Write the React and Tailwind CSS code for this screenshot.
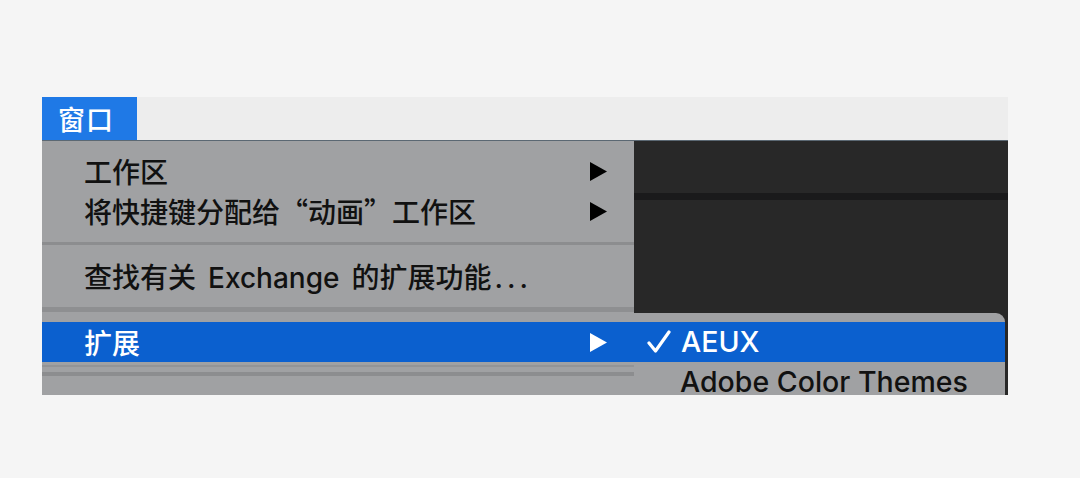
import React from "react";

const CJK = { fontFamily: '"Noto Sans CJK SC", "Noto Sans", sans-serif' };
const LAT = { fontFamily: 'Inter, "Noto Sans CJK SC", sans-serif' };

function Tri({ color = "#000" }) {
  return (
    <svg width="19" height="21" viewBox="0 0 19 21" className="shrink-0">
      <polygon points="1,1 18,10.5 1,20" fill={color} />
    </svg>
  );
}

function Row({ children, arrow, active }) {
  return (
    <div
      className={
        "h-[40px] flex items-center pl-[42px] pr-[26px] text-[28px] leading-none font-medium " +
        (active ? "bg-[#0b60cf] text-white" : "text-[#111]")
      }
    >
      <span className="flex-1 whitespace-nowrap">{children}</span>
      {arrow && <Tri color={active ? "#fff" : "#000"} />}
    </div>
  );
}

export default function App() {
  return (
    <div className="w-full h-[478px] bg-[#f5f5f5] pt-[97px] pl-[42px]" style={CJK}>
      <div className="w-[966px] h-[298px] overflow-hidden flex flex-col">
        <div className="h-[44px] flex bg-[#ededed] border-b border-[#5b6873] shrink-0">
          <div className="w-[95px] h-full bg-[#1f79e6] text-white text-[27px] font-medium leading-none flex items-center pl-[16px] tracking-[1px]">
            窗口
          </div>
        </div>
        <div className="flex flex-1">
          <div className="w-[592px] bg-[#a0a1a3] pt-[10px] flex flex-col">
            <Row arrow>工作区</Row>
            <Row arrow>将快捷键分配给“动画”工作区</Row>
            <div className="h-[26px] flex flex-col pt-[11px]">
              <div className="h-[3px] bg-[#8c8d8f]" />
            </div>
            <Row>
              查找有关<span style={LAT} className="mx-[12px]">Exchange</span>的扩展功能<span style={LAT} className="tracking-[4px] ml-[3px]">...</span>
            </Row>
            <div className="h-[25px] flex flex-col pt-[10px]">
              <div className="h-[5px] bg-[#8e8f91]" />
            </div>
            <Row arrow active>扩展</Row>
            <div className="h-[19px] flex flex-col pt-[3px] gap-[5px]">
              <div className="h-[2px] bg-[#939496]" />
              <div className="h-[4px] bg-[#8c8d8f]" />
            </div>
            <div className="h-[40px] pl-[158px] pt-[14px] text-[28px] leading-none text-[#111] whitespace-nowrap">
              共享面板
            </div>
          </div>
          <div className="flex-1 relative bg-[#282828] flex flex-col">
            <div className="h-[52px]" />
            <div className="h-[7px] bg-[#1a1a1b]" />
            <div className="absolute left-0 top-[172px] w-[371px] h-[100px] bg-[#a0a1a3] rounded-tr-[9px] pt-[9px]" style={LAT}>
              <div className="h-[40px] bg-[#0b60cf] text-white flex items-center pl-[13px] text-[28.5px] font-medium leading-none">
                <svg width="24" height="24" viewBox="0 0 24 24" className="mr-[10px]">
                  <path d="M2 13 L8.5 21 L22 2" fill="none" stroke="#fff" strokeWidth="3.2" strokeLinecap="round" strokeLinejoin="round" />
                </svg>
                AEUX
              </div>
              <div className="h-[40px] flex items-center pl-[46px] text-[28.5px] font-medium leading-none text-[#111] whitespace-nowrap">
                Adobe Color Themes
              </div>
            </div>
          </div>
        </div>
      </div>
    </div>
  );
}
